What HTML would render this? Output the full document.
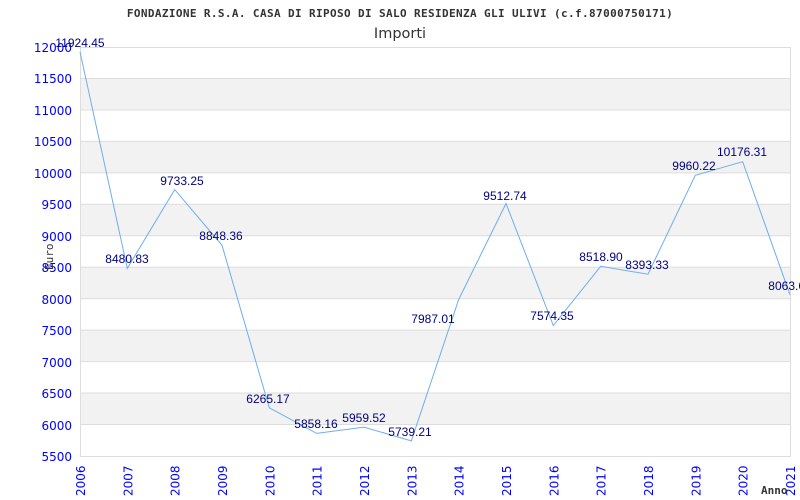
<!DOCTYPE html>
<html><head><meta charset="utf-8"><style>html,body{margin:0;padding:0;background:#fff;width:800px;height:500px;overflow:hidden}</style></head>
<body>
<svg width="800" height="500" viewBox="0 0 800 500" xmlns="http://www.w3.org/2000/svg">
<rect width="800" height="500" fill="#fff"/>
<g fill="#f2f2f2">
<rect x="80" y="78.5" width="710" height="31.5"/>
<rect x="80" y="141.4" width="710" height="31.5"/>
<rect x="80" y="204.3" width="710" height="31.5"/>
<rect x="80" y="267.2" width="710" height="31.5"/>
<rect x="80" y="330.1" width="710" height="31.5"/>
<rect x="80" y="393" width="710" height="31.5"/>
</g>
<g stroke="#dddddd" stroke-width="1">
<line x1="80" y1="47.5" x2="790" y2="47.5"/>
<line x1="80" y1="78.5" x2="790" y2="78.5"/>
<line x1="80" y1="110" x2="790" y2="110"/>
<line x1="80" y1="141.4" x2="790" y2="141.4"/>
<line x1="80" y1="172.9" x2="790" y2="172.9"/>
<line x1="80" y1="204.3" x2="790" y2="204.3"/>
<line x1="80" y1="235.8" x2="790" y2="235.8"/>
<line x1="80" y1="267.2" x2="790" y2="267.2"/>
<line x1="80" y1="298.7" x2="790" y2="298.7"/>
<line x1="80" y1="330.1" x2="790" y2="330.1"/>
<line x1="80" y1="361.6" x2="790" y2="361.6"/>
<line x1="80" y1="393" x2="790" y2="393"/>
<line x1="80" y1="424.5" x2="790" y2="424.5"/>
<line x1="80" y1="456.5" x2="790" y2="456.5"/>
<line x1="80.5" y1="47" x2="80.5" y2="457"/>
<line x1="790.5" y1="47" x2="790.5" y2="457"/>
</g>
<polyline fill="none" stroke="#6fadee" stroke-width="1" points="80,51.8 127.3,268.4 174.7,189.6 222,245.3 269.3,407.8 316.7,433.4 364,427.1 411.3,440.9 458.7,299.5 506,203.5 553.3,325.5 600.7,266.3 648,274.2 695.3,175.3 742.7,161.7 790,294.8"/>
<text x="400" y="17" text-anchor="middle" font-family="DejaVu Sans Mono, Liberation Mono, monospace" font-weight="bold" font-size="11" letter-spacing="0.38" fill="#333">FONDAZIONE R.S.A. CASA DI RIPOSO DI SALO RESIDENZA GLI ULIVI (c.f.87000750171)</text>
<text x="400" y="38" text-anchor="middle" font-family="DejaVu Sans, sans-serif" font-size="14.5" fill="#333">Importi</text>
<g font-family="DejaVu Sans, sans-serif" font-size="12" fill="#0000ff" text-anchor="end">
<text x="72" y="52">12000</text><text x="72" y="83">11500</text><text x="72" y="115">11000</text><text x="72" y="146">10500</text><text x="72" y="178">10000</text><text x="72" y="209">9500</text><text x="72" y="241">9000</text><text x="72" y="272">8500</text><text x="72" y="304">8000</text><text x="72" y="335">7500</text><text x="72" y="367">7000</text><text x="72" y="398">6500</text><text x="72" y="430">6000</text><text x="72" y="461">5500</text>
</g>
<g font-family="DejaVu Sans, sans-serif" font-size="12" fill="#0000ff">
<text transform="translate(85,496) rotate(-90)">2006</text>
<text transform="translate(132.3,496) rotate(-90)">2007</text>
<text transform="translate(179.7,496) rotate(-90)">2008</text>
<text transform="translate(227,496) rotate(-90)">2009</text>
<text transform="translate(274.3,496) rotate(-90)">2010</text>
<text transform="translate(321.7,496) rotate(-90)">2011</text>
<text transform="translate(369,496) rotate(-90)">2012</text>
<text transform="translate(416.3,496) rotate(-90)">2013</text>
<text transform="translate(463.7,496) rotate(-90)">2014</text>
<text transform="translate(511,496) rotate(-90)">2015</text>
<text transform="translate(558.3,496) rotate(-90)">2016</text>
<text transform="translate(605.7,496) rotate(-90)">2017</text>
<text transform="translate(653,496) rotate(-90)">2018</text>
<text transform="translate(700.3,496) rotate(-90)">2019</text>
<text transform="translate(747.7,496) rotate(-90)">2020</text>
<text transform="translate(795,496) rotate(-90)">2021</text>
</g>
<text x="761" y="494" font-family="DejaVu Sans Mono, monospace" font-weight="bold" font-size="11" fill="#333">Anno</text>
<text transform="translate(53,270) rotate(-90)" font-family="DejaVu Sans Mono, monospace" font-size="11" fill="#333">Euro</text>
<g font-family="Liberation Sans, Arial, sans-serif" font-size="12" fill="#000080" text-anchor="middle">
<text x="80" y="47">11924.45</text>
<text x="127" y="263">8480.83</text>
<text x="182" y="185">9733.25</text>
<text x="221" y="240">8848.36</text>
<text x="268" y="403">6265.17</text>
<text x="316" y="428">5858.16</text>
<text x="364" y="422">5959.52</text>
<text x="410" y="436">5739.21</text>
<text x="433" y="323">7987.01</text>
<text x="505" y="200">9512.74</text>
<text x="552" y="320">7574.35</text>
<text x="601" y="261">8518.90</text>
<text x="647" y="269">8393.33</text>
<text x="694" y="170">9960.22</text>
<text x="742" y="156">10176.31</text>
<text x="790" y="290">8063.60</text>
</g>
</svg>
</body></html>
